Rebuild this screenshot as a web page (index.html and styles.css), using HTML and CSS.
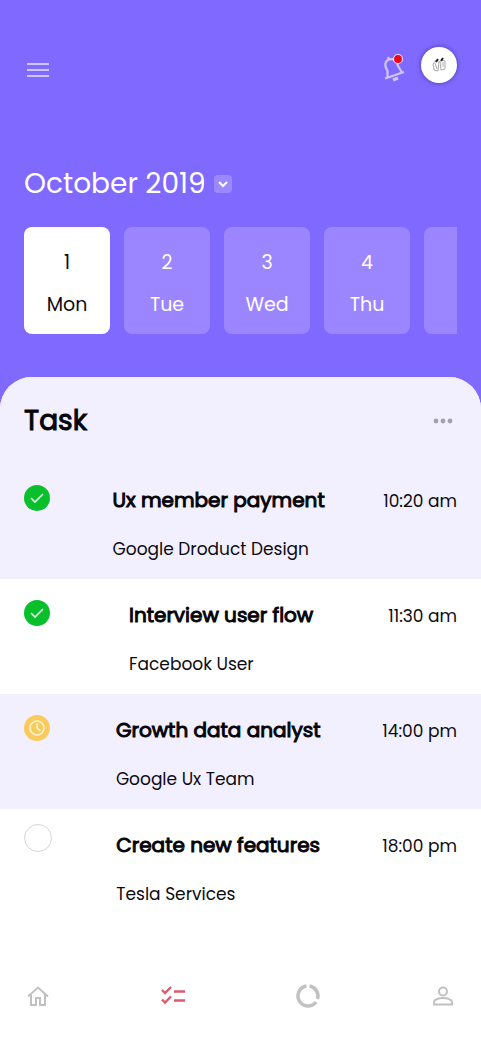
FILE: index.html
```html
<!DOCTYPE html>
<html lang="en">
<head>
<meta charset="utf-8">
<meta name="viewport" content="width=device-width, initial-scale=1">
<title>Tasks</title>
<link rel="stylesheet" href="styles.css">
</head>
<body>
<header class="hero">
  <div class="topbar">
    <button class="icon-btn" aria-label="Menu">
      <svg width="28" height="28" viewBox="0 0 28 28" fill="none" stroke="#d0c6ff" stroke-width="2"><path d="M3 8h22M3 14h22M3 20h22"/></svg>
    </button>
    <div class="actions">
      <button class="icon-btn" aria-label="Notifications">
        <svg width="28" height="32" viewBox="0 0 28 32" fill="none"><g stroke="#d0c6ff" stroke-width="2.200" stroke-linejoin="round"><path d="M6 26.500L25 20M8.500 25.500V19C5 13 6 9 10 7.500c5-1.500 8 1 9 6.500l4 6.500M10 7.500L9 5"/><path d="M14 28l5-2" stroke-width="3.500"/></g><circle cx="19" cy="7" r="4.500" fill="#e8061c" stroke="#f3d5f4" stroke-width="1.200"/></svg>
      </button>
      <button class="avatar" aria-label="Profile">
        <svg width="16" height="18" viewBox="0 0 16 18" fill="none"><path d="M5 4L2 8l1 6 4 1 1-10M9 5l1 9 4-1V5l-3-1M4 7l2 6M12 6v5" stroke="#aaa"/><path d="M5 6l2-3M10 5l2-3" stroke="#222" stroke-width="2"/></svg>
      </button>
    </div>
  </div>
  <div class="month">
    <h1 class="month-name">October 2019</h1>
    <button class="month-toggle" aria-label="Choose month">
      <svg width="12" height="12" viewBox="0 0 12 12" fill="none" stroke="#fff" stroke-width="2"><path d="M2 4l4 4 4-4"/></svg>
    </button>
  </div>
  <div class="days">
    <button class="day day-active"><span>1</span><span>Mon</span></button>
    <button class="day"><span>2</span><span>Tue</span></button>
    <button class="day"><span>3</span><span>Wed</span></button>
    <button class="day"><span>4</span><span>Thu</span></button>
    <button class="day" aria-label="Next day"></button>
  </div>
</header>
<main class="panel">
  <div class="panel-head">
    <h2 class="panel-title">Task</h2>
    <button class="icon-btn" aria-label="More">
      <svg width="28" height="28" viewBox="0 0 28 28" fill="#a3a1ab"><circle cx="7" cy="14" r="2.400"/><circle cx="14" cy="14" r="2.400"/><circle cx="21" cy="14" r="2.400"/></svg>
    </button>
  </div>
  <ul class="tasks">
    <li class="task">
      <span class="status"><svg width="26" height="26" viewBox="0 0 26 26" fill="none"><circle cx="13" cy="13" r="13" fill="#09bf2c"/><path d="M7 13l4 4 8-8" stroke="#e2ffe8" stroke-width="1.600"/></svg></span>
      <div class="info"><h3 class="name">Ux member payment</h3><p class="team">Google Droduct Design</p></div>
      <time class="time">10:20 am</time>
    </li>
    <li class="task">
      <span class="status"><svg width="26" height="26" viewBox="0 0 26 26" fill="none"><circle cx="13" cy="13" r="13" fill="#09bf2c"/><path d="M7 13l4 4 8-8" stroke="#e2ffe8" stroke-width="1.600"/></svg></span>
      <div class="info"><h3 class="name">Interview user flow</h3><p class="team">Facebook User</p></div>
      <time class="time">11:30 am</time>
    </li>
    <li class="task">
      <span class="status"><svg width="26" height="26" viewBox="0 0 26 26" fill="none"><circle cx="13" cy="13" r="13" fill="#f8cb5c"/><g stroke="#fff4d3" stroke-width="1.600"><circle cx="13" cy="13" r="7"/><path d="M13 8.500V13l3.500 3"/></g></svg></span>
      <div class="info"><h3 class="name">Growth data analyst</h3><p class="team">Google Ux Team</p></div>
      <time class="time">14:00 pm</time>
    </li>
    <li class="task">
      <span class="status status-open"><svg width="28" height="28" viewBox="0 0 28 28" fill="#fff" stroke="#d5d5d5"><circle cx="14" cy="14" r="13.500"/></svg></span>
      <div class="info"><h3 class="name">Create new features</h3><p class="team">Tesla Services</p></div>
      <time class="time">18:00 pm</time>
    </li>
  </ul>
</main>
<nav class="tabs">
  <a class="tab" href="#home" aria-label="Home"><svg width="28" height="28" viewBox="0 0 28 28" fill="none" stroke="#c1c1c1" stroke-width="2"><path d="M4 14.500L14 5.500l10 9M7 12.500V23h5v-7h4v7h5V12.500"/></svg></a>
  <a class="tab" href="#tasks" aria-label="Tasks"><svg width="28" height="28" viewBox="0 0 28 28" fill="none" stroke="#e0586b" stroke-width="2.400"><path d="M3 8l3 3 6-6M3 17.500l3 3 6-6M15 9.500h11M15 18.500h11"/></svg></a>
  <a class="tab" href="#stats" aria-label="Statistics"><svg width="28" height="28" viewBox="0 0 28 28" fill="none" stroke="#c1c1c1" stroke-width="3.500"><path d="M12.500 4.100A10 10 0 1 0 22 20M15.500 4.100A10 10 0 0 1 23.500 17"/></svg></a>
  <a class="tab" href="#account" aria-label="Account"><svg width="28" height="28" viewBox="0 0 28 28" fill="none" stroke="#c1c1c1" stroke-width="2"><circle cx="14" cy="9.500" r="4"/><path d="M5 22.500V20c0-2.500 5-4 9-4s9 1.500 9 4v2.500z"/></svg></a>
</nav>
</body>
</html>
```

FILE: styles.css
```css
* {
  box-sizing: border-box;
}

body {
  display: flex;
  flex-direction: column;
  min-height: 100vh;
  margin: 0;
  background: #fff;
  color: #0c0b12;
  font-family: Poppins, Inter, sans-serif;
}

button {
  padding: 0;
  border: 0;
  background: none;
  color: inherit;
  font: inherit;
  cursor: pointer;
}

h1, h2, h3, p, ul {
  margin: 0;
  padding: 0;
}

svg {
  display: block;
}

.hero {
  padding: 47px 24px 76px;
  background: #8069ff;
  color: #fff;
}

.topbar,
.actions,
.month,
.panel-head,
.tabs {
  display: flex;
  align-items: center;
}

.topbar,
.panel-head,
.tabs {
  justify-content: space-between;
}

.topbar {
  align-items: flex-end;
  height: 37px;
}

.actions {
  align-items: flex-start;
  gap: 14px;
  height: 37px;
}

.actions .icon-btn {
  padding-top: 5px;
}

.avatar {
  display: grid;
  place-items: center;
  width: 36px;
  height: 36px;
  border-radius: 50%;
  background: #fff;
  box-shadow: 0 0 5px #4b3ca6;
}

.month {
  gap: 8px;
  margin-top: 80px;
}

.month-name {
  font-size: 28px;
  font-weight: 400;
  line-height: 40px;
}

.month-toggle {
  display: grid;
  place-items: center;
  width: 18px;
  height: 18px;
  border-radius: 4px;
  background: #9c88ff;
}

.days {
  display: flex;
  gap: 14px;
  margin-top: 23px;
  overflow: hidden;
}

.day {
  display: flex;
  flex: 0 0 86px;
  flex-direction: column;
  align-items: center;
  gap: 14px;
  height: 107px;
  padding-top: 22px;
  border-radius: 8px;
  background: #9b86ff;
  font-size: 19px;
  line-height: 28px;
}

.day-active {
  background: #fff;
  color: #0c0b12;
}

.panel {
  margin-top: -33px;
  overflow: hidden;
  border-radius: 32px 32px 0 0;
  background: #fff;
}

.panel-head {
  height: 87px;
  padding: 0 24px;
  background: #f2f0fe;
}

.panel-title,
.name {
  color: #050408;
  font-weight: 400;
  -webkit-text-stroke: 1px currentColor;
}

.panel-title {
  font-size: 28px;
}

.tasks {
  list-style: none;
}

.task {
  display: flex;
  justify-content: space-between;
  height: 115px;
  padding: 20px 24px;
}

.task:nth-child(odd) {
  background: #f2f0fe;
}

.status {
  width: 30px;
  padding-top: 1px;
}

.status-open {
  margin-top: -6px;
}

.name {
  font-size: 20px;
  line-height: 32px;
}

.team {
  margin-top: 20px;
  font-size: 17px;
  line-height: 26px;
}

.time {
  font-size: 17px;
  line-height: 34px;
}

.tabs {
  margin-top: auto;
  padding: 37px 24px;
}
```
